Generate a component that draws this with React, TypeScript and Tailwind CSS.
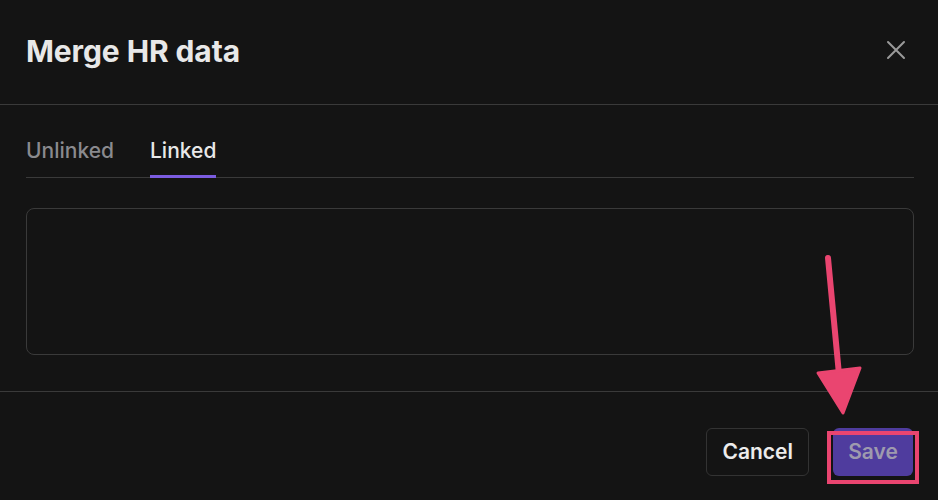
import React, { useState } from 'react';

export default function App() {
  const [tab, setTab] = useState<'unlinked' | 'linked'>('linked');

  return (
    <div
      className="relative w-[938px] h-[500px] overflow-hidden bg-[#141414] text-[#e6e6e6]"
      style={{ fontFamily: 'Inter, "Noto Sans", sans-serif' }}
    >
      {/* Header */}
      <div className="flex items-center justify-between h-[105px] pl-[26px] pr-[26px] border-b border-[#3a3a3a]">
        <h2 className="text-[30px] font-bold tracking-[-0.1px] text-[#e8e8e8] pb-[2px]">Merge HR data</h2>
        <button className="text-[#9a9a9a] p-1 mb-[4px]">
          <svg className="w-[24px] h-[24px]" fill="none" stroke="currentColor" viewBox="0 0 24 24">
            <path strokeLinecap="round" strokeLinejoin="round" strokeWidth={2} d="M4 4l16 16M20 4L4 20" />
          </svg>
        </button>
      </div>

      {/* Body */}
      <div className="pl-[26px] pr-[24px] pt-[30px] pb-[36px] border-b border-[#3a3a3a]">
        <div className="flex gap-[36px] border-b border-[#3a3a3a]">
          <button
            onClick={() => setTab('unlinked')}
            className={`pb-[8px] text-[21px] font-medium border-b-[3px] -mb-px ${
              tab === 'unlinked' ? 'text-[#e8e8e8] border-[#7b5ce0]' : 'text-[#8a8a8e] border-transparent'
            }`}
          >
            Unlinked
          </button>
          <button
            onClick={() => setTab('linked')}
            className={`pb-[8px] text-[21px] font-medium border-b-[3px] -mb-px ${
              tab === 'linked' ? 'text-[#e8e8e8] border-[#7b5ce0]' : 'text-[#8a8a8e] border-transparent'
            }`}
          >
            Linked
          </button>
        </div>
        <div className="mt-[30px] h-[147px] rounded-[8px] border border-[#3a3a3a]" />
      </div>

      {/* Footer */}
      <div className="flex justify-end items-center gap-[24px] pr-[25px] pt-[36px]">
        <button className="h-[48px] px-[15px] rounded-[6px] border border-[#333] text-[21px] font-semibold text-[#ececec]">
          Cancel
        </button>
        <button className="h-[48px] w-[80px] rounded-[6px] bg-[#4f3c9e] text-[21px] font-semibold text-[#9e9aae]">
          Save
        </button>
      </div>

      {/* Annotation */}
      <div className="absolute left-[827px] top-[431px] w-[92px] h-[53px] border-[4px] border-[#ea4570] pointer-events-none" />
      <svg className="absolute left-0 top-0 pointer-events-none" width="938" height="500">
        <line x1="828" y1="258" x2="840" y2="385" stroke="#ea4570" strokeWidth="6" strokeLinecap="round" />
        <polygon points="818,373 860,368 843,413" fill="#ea4570" stroke="#ea4570" strokeWidth="3" strokeLinejoin="round" />
      </svg>
    </div>
  );
}
